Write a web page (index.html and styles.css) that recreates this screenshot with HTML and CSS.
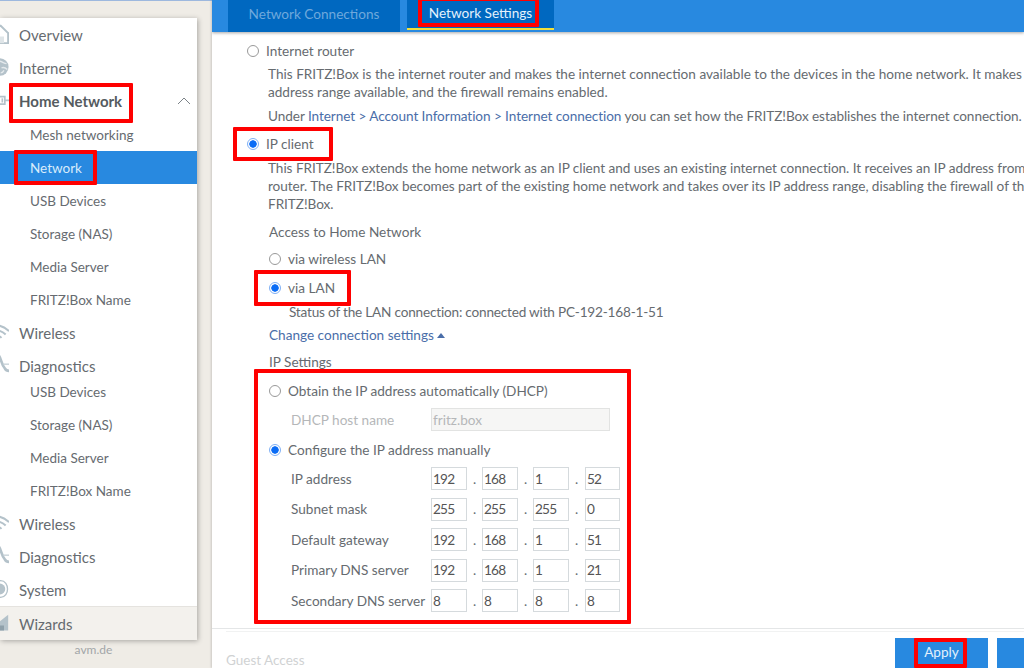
FILE: index.html
```html
<!DOCTYPE html>
<html lang="en">
<head>
<meta charset="utf-8">
<title>FRITZ!Box Network Settings</title>
<link rel="stylesheet" href="styles.css">
</head>
<body>
<div class="page">
  <aside class="side">
    <nav class="card">
      <div class="menu">
        <a class="item"><svg class="ico" viewBox="0 0 24 24"><path d="M10 4 14 2l9 9M23 10v13H12" fill="none" stroke="#b4c2ca" stroke-width="2.4"/><path d="M13 15h5v8h-5z" fill="#dfe5e8"/></svg>Overview</a>
        <a class="item"><svg class="ico" viewBox="0 0 24 24"><circle cx="13" cy="12" r="10.5" fill="#b4c2ca"/><path d="M13 5c4 1 5 3 8 3M15 13c3-1 5 0 7 2M14 19c2 0 3-1 4-3" fill="none" stroke="#e4e9ec" stroke-width="1.6"/></svg>Internet</a>
        <a class="item open"><svg class="ico" viewBox="0 0 24 24"><path d="M10 8h9v9h-9zM19 12.500h5" fill="none" stroke="#b4c2ca" stroke-width="2"/><path d="M15 10h2v5h-2z" fill="#b4c2ca"/></svg>Home Network<svg class="chev" viewBox="0 0 14 8"><path d="M1 7 7 1l6 6" fill="none" stroke="#7b8287" stroke-width="1"/></svg></a>
        <a class="sub lead">Mesh networking</a>
        <a class="sub active">Network</a>
        <a class="sub">USB Devices</a>
        <a class="sub">Storage (NAS)</a>
        <a class="sub">Media Server</a>
        <a class="sub">FRITZ!Box Name</a>
        <a class="item"><svg class="ico" viewBox="0 0 24 24"><path d="M6 5c7-2 12 0 18 6M6 11c6-2 10 0 14 4M8 17c3-1 5 0 7 2" fill="none" stroke="#b4c2ca" stroke-width="2.4"/></svg>Wireless</a>
        <a class="item"><svg class="ico" viewBox="0 0 24 24"><path d="M12 1c3 4 3 11 7 15 1 2 3 3 5 3" fill="none" stroke="#b4c2ca" stroke-width="3.2"/><path d="M17 11h8" stroke="#c6d1d7" stroke-width="1.6"/></svg>Diagnostics</a>
        <a class="sub tight">USB Devices</a>
        <a class="sub">Storage (NAS)</a>
        <a class="sub">Media Server</a>
        <a class="sub">FRITZ!Box Name</a>
        <a class="item"><svg class="ico" viewBox="0 0 24 24"><path d="M6 5c7-2 12 0 18 6M6 11c6-2 10 0 14 4M8 17c3-1 5 0 7 2" fill="none" stroke="#b4c2ca" stroke-width="2.4"/></svg>Wireless</a>
        <a class="item"><svg class="ico" viewBox="0 0 24 24"><path d="M12 1c3 4 3 11 7 15 1 2 3 3 5 3" fill="none" stroke="#b4c2ca" stroke-width="3.2"/><path d="M17 11h8" stroke="#c6d1d7" stroke-width="1.6"/></svg>Diagnostics</a>
        <a class="item"><svg class="ico" viewBox="0 0 24 24"><path d="M14 2c11 0 11 20 0 20M14 2c-5 0-5 20 0 20" fill="none" stroke="#b4c2ca" stroke-width="1.6"/><circle cx="13" cy="12" r="6.500" fill="#b4c2ca"/></svg>System</a>
      </div>
      <a class="item wizards"><svg class="ico" viewBox="0 0 24 24"><path d="M13 10 23 2v19H13z" fill="#b4c2ca"/><path d="M12 15h6v6h-6z" fill="#8fa0aa"/></svg>Wizards</a>
    </nav>
    <div class="avm">avm.de</div>
  </aside>
  <main class="main">
    <header class="tabs">
      <a class="tab">Network Connections</a>
      <a class="tab current">Network Settings</a>
    </header>
    <section class="content">
      <label class="radio first"><span class="dot"></span>Internet router</label>
      <div class="desc">
        <p>This FRITZ!Box is the internet router and makes the internet connection available to the devices in the home network. It makes</p>
        <p>address range available, and the firewall remains enabled.</p>
      </div>
      <p class="under">Under <a class="link">Internet &gt; Account Information &gt; Internet connection</a> you can set how the FRITZ!Box establishes the internet connection.</p>
      <label class="radio client"><span class="dot on"></span>IP client</label>
      <div class="desc">
        <p>This FRITZ!Box extends the home network as an IP client and uses an existing internet connection. It receives an IP address from</p>
        <p>router. The FRITZ!Box becomes part of the existing home network and takes over its IP address range, disabling the firewall of th</p>
        <p>FRITZ!Box.</p>
      </div>
      <div class="indent">
        <p class="head access">Access to Home Network</p>
        <label class="radio wlan"><span class="dot"></span>via wireless LAN</label>
        <label class="radio lan"><span class="dot on"></span>via LAN</label>
        <p class="status">Status of the LAN connection: connected with PC-192-168-1-51</p>
        <a class="link change">Change connection settings <span class="tri"></span></a>
        <p class="head ipset">IP Settings</p>
        <label class="radio dhcp"><span class="dot"></span>Obtain the IP address automatically (DHCP)</label>
        <div class="row host"><span class="lbl muted">DHCP host name</span><span class="ipt wide">fritz.box</span></div>
        <label class="radio manual"><span class="dot on"></span>Configure the IP address manually</label>
        <div class="grid">
          <div class="row"><span class="lbl">IP address</span><span class="ipt">192</span><i>.</i><span class="ipt">168</span><i>.</i><span class="ipt">1</span><i>.</i><span class="ipt">52</span></div>
          <div class="row"><span class="lbl">Subnet mask</span><span class="ipt">255</span><i>.</i><span class="ipt">255</span><i>.</i><span class="ipt">255</span><i>.</i><span class="ipt">0</span></div>
          <div class="row"><span class="lbl">Default gateway</span><span class="ipt">192</span><i>.</i><span class="ipt">168</span><i>.</i><span class="ipt">1</span><i>.</i><span class="ipt">51</span></div>
          <div class="row"><span class="lbl">Primary DNS server</span><span class="ipt">192</span><i>.</i><span class="ipt">168</span><i>.</i><span class="ipt">1</span><i>.</i><span class="ipt">21</span></div>
          <div class="row"><span class="lbl">Secondary DNS server</span><span class="ipt">8</span><i>.</i><span class="ipt">8</span><i>.</i><span class="ipt">8</span><i>.</i><span class="ipt">8</span></div>
        </div>
      </div>
    </section>
    <footer class="foot">
      <span class="guest">Guest Access</span>
      <a class="btn">Apply</a>
      <a class="btn last"></a>
    </footer>
  </main>
</div>
<div class="mark m-home"></div>
<div class="mark m-net"></div>
<div class="mark m-tab"></div>
<div class="mark m-client"></div>
<div class="mark m-lan"></div>
<div class="mark m-ip"></div>
<div class="mark m-apply"></div>
</body>
</html>
```
FILE: styles.css
```css
* { box-sizing: border-box; }
html, body { margin: 0; height: 100%; overflow: hidden; }
body { position: relative; background: #efece6; font-family: "Lato", "Noto Sans", sans-serif; font-size: 13.6px; color: #666b70; }
p { margin: 0; }
.page { display: flex; height: 668px; border-top: 1px solid #9db8de; }
.side { width: 212px; flex: none; padding: 17px 15px 0 0; }
.card { background: #fff; height: 622px; display: flex; flex-direction: column; overflow: hidden; box-shadow: 1px 1px 5px rgba(0,0,0,.3); }
.menu { flex: 1; }
.item { display: flex; align-items: center; height: 33px; padding-left: 19px; font-size: 15px; position: relative; }
.item.open { font-weight: 700; color: #555b60; }
.ico { width: 20px; height: 20px; position: absolute; left: -11px; top: 6px; }
.chev { width: 14px; height: 8px; position: absolute; left: 177px; top: 13px; }
.sub { display: flex; align-items: center; height: 33px; padding-left: 30px; font-size: 13.5px; }
.sub.lead { margin-top: 1px; }
.sub.tight { margin-top: -7px; }
.active { background: #2889e0; color: #d9ecfb; }
.wizards { background: #f3f1ed; border-top: 1px solid #e5e3df; height: 34px; }
.avm { text-align: center; font-size: 12px; color: #a2a6a8; padding: 2px 10px 0 0; }
.main { flex: 1; min-width: 0; background: #fff; display: flex; flex-direction: column; overflow: hidden; margin-top: -1px; box-shadow: -1px 0 2px rgba(0,0,0,.15); position: relative; }
.tabs { height: 32px; flex: none; background: #2889e0; padding-left: 16px; display: flex; gap: 7px; box-shadow: 0 1px 3px rgba(0,0,0,.35); position: relative; }
.tab { width: 172px; background: #0068c0; color: #6fa8dc; height: 32px; display: flex; align-items: center; justify-content: center; padding-bottom: 4px; }
.tab.current { width: 147px; color: #e3f1fc; border-bottom: 2px solid #f2df3a; height: 30px; padding-bottom: 2px; }
.content { flex: 1; min-height: 0; padding: 10px 0 0 35px; white-space: nowrap; overflow: hidden; line-height: 18px; }
.radio { display: flex; align-items: center; gap: 7px; }
.dot { width: 12px; height: 12px; border-radius: 50%; border: 1px solid #999; background: #fff; flex: none; }
.dot.on { border-color: #7fb0f5; background: radial-gradient(circle, #0a6cf5 0 3.4px, #fff 4px); }
.desc { padding-left: 21px; margin-top: 5px; }
.under { padding-left: 21px; margin-top: 6px; letter-spacing: -.07px; }
.link { color: #4a6ea9; }
.client { margin-top: 10px; }
.client + .desc { margin-top: 6px; letter-spacing: -.05px; }
.indent { padding-left: 22px; }
.access { margin-top: 10px; }
.wlan { margin-top: 9px; }
.lan { margin-top: 11px; }
.status { padding-left: 20px; margin-top: 6px; letter-spacing: -.2px; }
.change { display: block; margin-top: 5px; }
.tri { display: inline-block; width: 0; height: 0; border: 4px solid transparent; border-bottom: 5px solid #4a6ea9; border-top: 0; vertical-align: 2px; }
.ipset { margin-top: 9px; }
.dhcp { margin-top: 11px; }
.row { display: flex; align-items: center; padding-left: 22px; height: 23px; }
.host { margin-top: 8px; }
.manual { margin-top: 10px; }
.lbl { width: 140px; flex: none; }
.muted { color: #b5b7b9; }
.ipt { width: 36px; height: 23px; border: 1px solid #d5dadd; padding-left: 1px; color: #555; display: flex; align-items: center; background: #fff; flex: none; letter-spacing: -.8px; }
.ipt.wide { width: 179px; color: #b5b7b9; background: #f6f6f5; border-color: #e2e3e2; letter-spacing: 0; }
.ipt:last-child { margin-left: 1px; width: 35px; }
.ipt.wide:last-child { margin-left: 0; width: 179px; }
.row i { width: 15px; text-align: center; font-style: normal; flex: none; }
.grid { display: flex; flex-direction: column; gap: 7.5px; margin-top: 8px; }
.foot { height: 40px; flex: none; border-top: 1px solid #e4e6e7; display: flex; align-items: flex-end; padding-left: 14px; position: relative; overflow: hidden; }
.foot::before { content: ""; position: absolute; left: 14px; right: 0; top: 2px; height: 1px; background: #f1f2f2; }
.guest { color: #d0d2d3; font-size: 13.5px; flex: 1; }
.btn { width: 93px; height: 30px; background: #2889e0; color: #e3f1fc; display: flex; align-items: center; justify-content: center; flex: none; padding-bottom: 2px; }
.btn.last { margin-left: 9px; margin-right: -66px; }
.mark { position: absolute; border: 4px solid #f00; border-radius: 1px; }
.m-home { left: 9px; top: 83px; width: 124px; height: 40px; }
.m-net { left: 14px; top: 150px; width: 83px; height: 35px; }
.m-tab { left: 418px; top: -3px; width: 121px; height: 30px; }
.m-client { left: 233px; top: 127px; width: 100px; height: 34px; }
.m-lan { left: 254px; top: 270px; width: 97px; height: 36px; }
.m-ip { left: 254px; top: 369px; width: 377px; height: 255px; }
.m-apply { left: 914px; top: 638px; width: 53px; height: 30px; }
```
